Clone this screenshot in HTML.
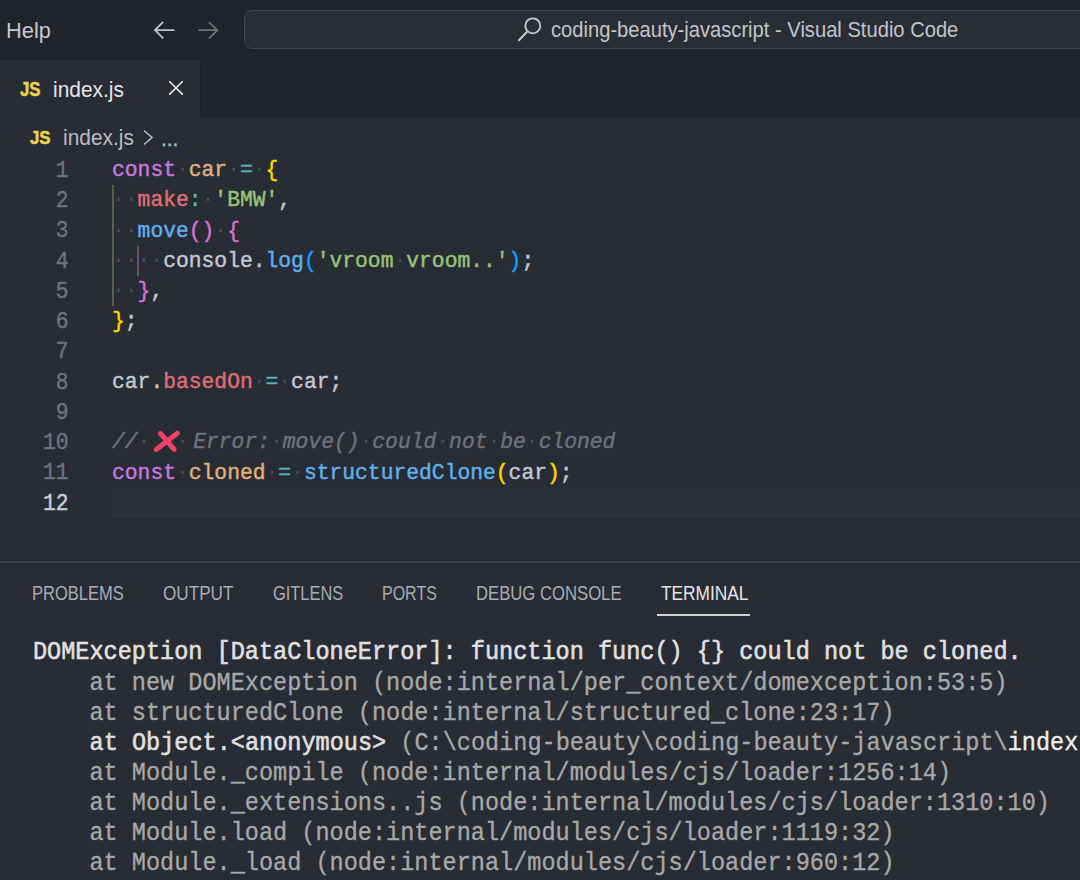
<!DOCTYPE html>
<html><head><meta charset="utf-8">
<style>
*{margin:0;padding:0;box-sizing:border-box}
html,body{width:1080px;height:880px;overflow:hidden;background:#282c34}
body{position:relative;font-family:"Liberation Sans",sans-serif}
.a{position:absolute}
.t1{position:absolute;white-space:pre;line-height:1;transform-origin:0 0}
#title{left:0;top:0;width:1080px;height:58px;background:#21252b}
#tabs{left:0;top:58px;width:1080px;height:59px;background:#21252b}
#tab{left:0;top:59.5px;width:201px;height:57.5px;background:#282c34;border-right:1px solid #1c1f24}
#editor{left:0;top:117px;width:1080px;height:444px;background:#282c34}
#panel{left:0;top:561px;width:1080px;height:319px;background:#282c34;border-top:2px solid #3a3f4a}
.code{position:absolute;font-family:"Liberation Mono",monospace;font-size:22px;white-space:pre;line-height:30.27px;transform:scaleX(0.969);-webkit-text-stroke:0.45px currentColor;transform-origin:0 0}
.term{position:absolute;font-family:"Liberation Mono",monospace;font-size:26px;white-space:pre;line-height:30.13px;transform:scaleX(0.9053);-webkit-text-stroke:0.35px currentColor;transform-origin:0 0}
.ln{color:#6b7380}
.k{color:#c678dd}.v{color:#e0b07e}.o{color:#56b6c2}.b1{color:#ffd700}.b2{color:#da70d6}.b3{color:#179fff}
.p{color:#e06c75}.s{color:#98c379}.t{color:#c3c8d1}.f{color:#61afef}.c{color:#6c727e;font-style:italic}
.w{color:#4a4f5a;-webkit-text-stroke:0}
.hi{color:#e0e0e0;-webkit-text-stroke:0.6px #e0e0e0}
.ptab{font-size:20px;color:#a9adb3;top:582.8px}
</style></head><body>
<div id="title" class="a"></div>
<div id="tabs" class="a"></div>
<div id="tab" class="a"></div>
<div id="editor" class="a"></div>
<div id="panel" class="a"></div>

<!-- title bar -->
<div class="t1" style="left:6px;top:20px;font-size:22.5px;color:#c5c8ce;transform:scaleX(0.97)">Help</div>
<svg class="a" style="left:150px;top:18px" width="28" height="24" viewBox="0 0 28 24"><path d="M24.4 12.1H5.2M13.2 3.9L5 12.1L13.2 20.3" fill="none" stroke="#bfc4cc" stroke-width="1.8"/></svg>
<svg class="a" style="left:194px;top:18px" width="28" height="24" viewBox="0 0 28 24"><path d="M4.4 12.2H23.6M14.8 4.2L23.4 12.2L14.8 20.6" fill="none" stroke="#6e7278" stroke-width="1.8"/></svg>
<div class="a" style="left:244px;top:9.5px;width:900px;height:39.5px;border:1.5px solid #41454c;border-radius:8px;background:#2a2d33"></div>
<svg class="a" style="left:512px;top:12px" width="34" height="32" viewBox="0 0 34 32"><circle cx="20.8" cy="13.8" r="7.5" fill="none" stroke="#c5c8ce" stroke-width="1.8"/><path d="M15.5 19.2L7 28.3" stroke="#c5c8ce" stroke-width="2" stroke-linecap="round"/></svg>
<div class="t1" style="left:550.5px;top:20px;font-size:21.4px;color:#c0c5cd;transform:scaleX(0.942)">coding-beauty-javascript - Visual Studio Code</div>

<!-- tab -->
<div class="t1" style="left:19.5px;top:79.2px;font-size:20px;font-weight:bold;color:#e8d44d;transform:scaleX(0.84);-webkit-text-stroke:0.5px #e8d44d">JS</div>
<div class="t1" style="left:53px;top:78.5px;font-size:22.5px;color:#e6e6e6;transform:scaleX(0.93)">index.js</div>
<svg class="a" style="left:166px;top:78px" width="20" height="20" viewBox="0 0 20 20"><path d="M3.2 3.2L16.8 16.6M16.8 3.2L3.2 16.6" stroke="#e6e6e6" stroke-width="1.6"/></svg>

<!-- breadcrumb -->
<div class="t1" style="left:29.6px;top:128px;font-size:19px;font-weight:bold;color:#e8d44d;transform:scaleX(0.88);-webkit-text-stroke:0.5px #e8d44d">JS</div>
<div class="t1" style="left:63px;top:127px;font-size:22px;color:#b9bcc2;transform:scaleX(0.95)">index.js</div>
<svg class="a" style="left:141px;top:128px" width="14" height="18" viewBox="0 0 14 18"><path d="M3 2.5L11 9.5L3 16.5" fill="none" stroke="#b9bcc2" stroke-width="1.6"/></svg>
<div class="t1" style="left:161px;top:127.5px;font-size:22px;color:#b9bcc2;transform:scaleX(0.95);-webkit-text-stroke:0.3px #b9bcc2">...</div>

<!-- code -->
<div class="a" style="left:112px;top:487.7px;width:968px;height:30.27px;background:#2c313c"></div>
<div class="code ln" style="left:42.9px;top:155.8px;font-size:23px;transform:scaleX(0.9268)"> 1
 2
 3
 4
 5
 6
 7
 8
 9
10
11
<span style="color:#c8ccd4">12</span></div>
<div class="code" style="left:112px;top:156.1px"><span class="k">const</span><span class="w">·</span><span class="v">car</span><span class="w">·</span><span class="o">=</span><span class="w">·</span><span class="b1">{</span>
<span class="w">··</span><span class="p">make</span><span class="o">:</span><span class="w">·</span><span class="s">'BMW'</span><span class="t">,</span>
<span class="w">··</span><span class="f">move</span><span class="b2">()</span><span class="w">·</span><span class="b2">{</span>
<span class="w">····</span><span class="t">console</span><span class="t">.</span><span class="f">log</span><span class="b3">(</span><span class="s">'vroom<span class="w">·</span>vroom..'</span><span class="b3">)</span><span class="t">;</span>
<span class="w">··</span><span class="b2">}</span><span class="t">,</span>
<span class="b1">}</span><span class="t">;</span>

<span class="t">car.</span><span class="p">basedOn</span><span class="w">·</span><span class="o">=</span><span class="w">·</span><span class="t">car;</span>

<span class="c">//<span class="w">·</span>  <span class="w">·</span><span style="position:relative;left:4.6px">Error:<span class="w">·</span>move()<span class="w">·</span>could<span class="w">·</span>not<span class="w">·</span>be<span class="w">·</span>cloned</span></span>
<span class="k">const</span><span class="w">·</span><span class="v">cloned</span><span class="w">·</span><span class="o">=</span><span class="w">·</span><span class="f">structuredClone</span><span class="b1">(</span><span class="t">car</span><span class="b1">)</span><span class="t">;</span>
</div>
<!-- indent guides -->
<div class="a" style="left:112px;top:185px;width:2px;height:121px;background:#5f5d3a"></div>
<div class="a" style="left:137px;top:245.5px;width:2px;height:30.3px;background:#6e4a78"></div>
<!-- X emoji -->
<svg class="a" style="left:150px;top:427px" width="32" height="28" viewBox="0 0 32 28"><path d="M6.2 22.6L27.4 6.2M10.4 6.4L24.2 22.4" stroke="#f0416a" stroke-width="5" stroke-linecap="round"/></svg>

<!-- panel tabs -->
<div class="t1 ptab" style="left:31.6px;transform:scaleX(0.825)">PROBLEMS</div>
<div class="t1 ptab" style="left:163px;transform:scaleX(0.857)">OUTPUT</div>
<div class="t1 ptab" style="left:272.6px;transform:scaleX(0.82)">GITLENS</div>
<div class="t1 ptab" style="left:382px;transform:scaleX(0.80)">PORTS</div>
<div class="t1 ptab" style="left:476px;transform:scaleX(0.834)">DEBUG CONSOLE</div>
<div class="t1 ptab" style="left:660.5px;color:#e6e6e6;transform:scaleX(0.865)">TERMINAL</div>
<div class="a" style="left:657px;top:613.5px;width:93px;height:2px;background:#d0d0d0"></div>

<!-- terminal -->
<div class="term" style="left:33.1px;top:637.4px;color:#a8a8a8"><span class="hi">DOMException [DataCloneError]: function func() {} could not be cloned.</span>
    at new DOMException (node:internal/per_context/domexception:53:5)
    at structuredClone (node:internal/structured_clone:23:17)
    <span class="hi">at Object.&lt;anonymous&gt;</span> (C:\coding-beauty\coding-beauty-javascript\<span style="color:#f0f0f0">index.js:14:16)</span>
    at Module._compile (node:internal/modules/cjs/loader:1256:14)
    at Module._extensions..js (node:internal/modules/cjs/loader:1310:10)
    at Module.load (node:internal/modules/cjs/loader:1119:32)
    at Module._load (node:internal/modules/cjs/loader:960:12)</div>
</body></html>
